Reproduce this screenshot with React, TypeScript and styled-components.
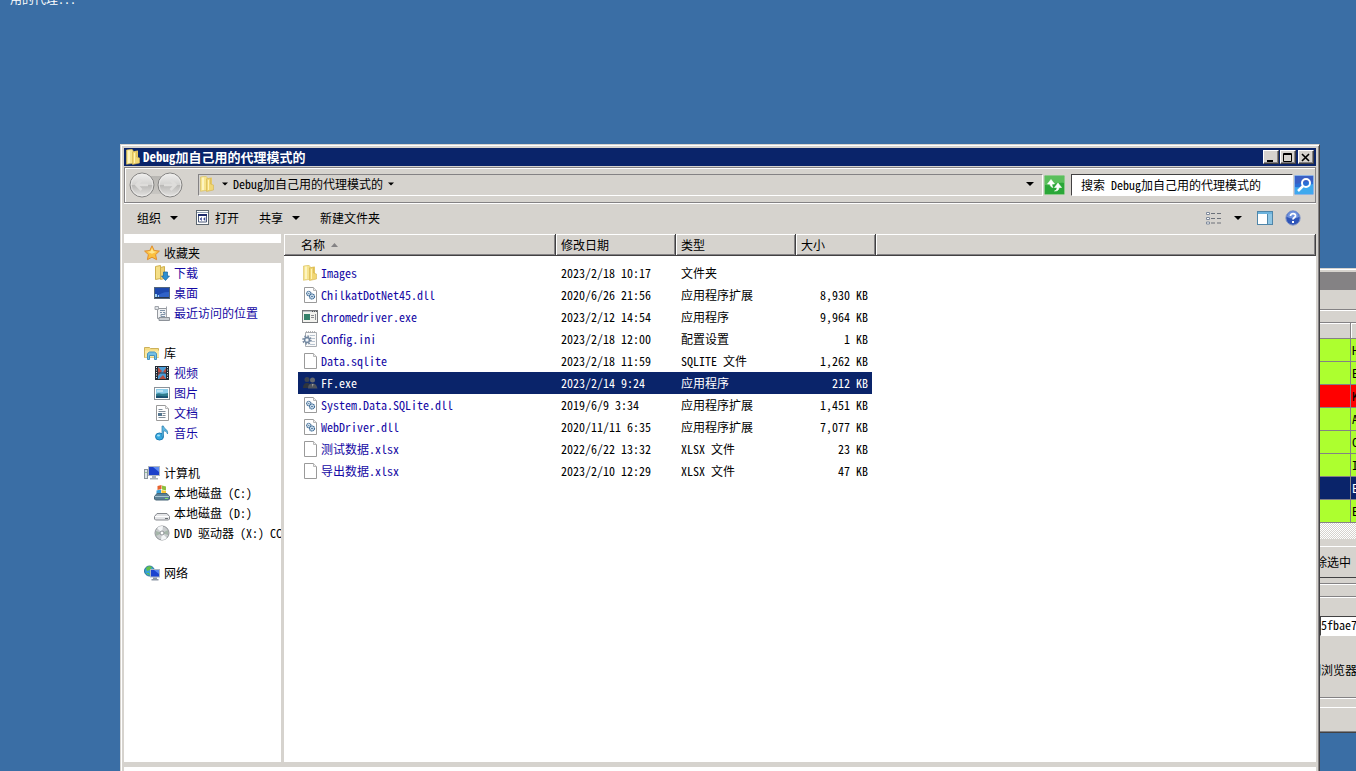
import React from "react";
import styled, { createGlobalStyle, css } from "styled-components";

const face = "#d6d3ce";
const shadow = "#848284";
const dark = "#424142";
const navy = "#0a246a";
const link = "#1408a4";

const Global = createGlobalStyle`
  *, *::before, *::after { box-sizing: border-box; }
  html, body, #root { height: 100%; margin: 0; }
  body {
    overflow: hidden;
    background: #3a6ea5;
    color: #000;
    font: 12px/20px "Noto Sans CJK SC", sans-serif;
    font-feature-settings: "hwid" 1;
  }
  button, input, table {
    font: inherit;
    font-feature-settings: inherit;
    color: inherit;
  }
  svg { display: block; flex: none; }
`;

const Desktop = styled.main`
  position: relative;
  height: 100%;
  overflow: hidden;
`;

const DesktopLabel = styled.span`
  position: absolute;
  top: -11px;
  left: 10px;
  color: #fff;
`;

const Frame = styled.section`
  position: absolute;
  display: flex;
  flex-direction: column;
  padding: 2px;
  background: ${face};
  border: 2px solid;
  border-color: ${face} ${dark} ${dark} ${face};
  box-shadow: inset 1px 1px #fff, inset -1px -1px ${shadow};
`;

const ExplorerFrame = styled(Frame)`
  top: 144px;
  left: 120px;
  right: 36px;
  bottom: 0;
  border-width: 1px 1px 0 1px;
  padding: 3px 3px 0 3px;
  box-shadow: inset 1px 1px #fff, inset -1px 0 ${shadow};
`;

const TitleBar = styled.header`
  display: flex;
  flex: none;
  align-items: center;
  gap: 2px;
  height: 18px;
  padding: 0 2px 0 1px;
  background: ${navy};
  color: #fff;
`;

const Title = styled.h1`
  flex: 1;
  margin: 0;
  font-size: 13px;
  font-weight: 700;
  line-height: 18px;
`;

const Captions = styled.div`
  display: flex;
  gap: 1px;
`;

const CaptionButton = styled.button`
  display: grid;
  place-items: center;
  width: 16px;
  height: 14px;
  padding: 0;
  background: ${face};
  border: 1px solid;
  border-color: #fff ${dark} ${dark} #fff;
  box-shadow: inset -1px -1px ${shadow};
`;

const NavBar = styled.nav`
  display: flex;
  flex: none;
  align-items: center;
  height: 36px;
  margin-top: 1px;
  padding: 0 1px 0 4px;
  border: 1px solid ${shadow};
  box-shadow: inset 1px 1px #fff, 0 1px #fff;
`;

const History = styled.div`
  display: flex;
  gap: 2px;
  margin-right: 15px;
  background: linear-gradient(#b8b6b2, #c8c6c2) center / 28px 18px no-repeat;
`;

const Plain = styled.button`
  display: flex;
  align-items: center;
  padding: 0;
  border: 0;
  background: none;
`;

const AddressBar = styled.div`
  display: flex;
  flex: 1;
  align-items: center;
  height: 22px;
  padding: 0 8px 2px 0;
  border: 1px solid;
  border-color: ${shadow} #fff #fff ${shadow};
`;

const Crumb = styled(Plain)`
  gap: 5px;
  margin-left: 7px;
`;

const Fill = styled.span`
  flex: 1;
`;

const RefreshButton = styled(Plain)`
  margin: 0 6px 0 1px;
`;

const SearchBox = styled.input`
  width: 222px;
  height: 22px;
  padding: 0 9px 2px;
  border: 1px solid;
  border-color: ${dark} #fff #fff ${dark};
  outline: 0;
  background: #fff;
`;

const SearchButton = styled(Plain)`
  margin-left: 1px;
`;

const ToolBar = styled.div`
  display: flex;
  flex: none;
  align-items: center;
  height: 31px;
  padding: 0 15px 2px 13px;
`;

const Tool = styled(Plain)<{ $gap?: number; $before?: number }>`
  gap: ${(p) => p.$gap ?? 9}px;
  margin-left: ${(p) => p.$before ?? 0}px;
`;

const Body = styled.div`
  display: flex;
  flex: 1;
  min-height: 0;
`;

const Sidebar = styled.aside`
  flex: none;
  width: 160px;
  padding-top: 9px;
  overflow: hidden;
  background: #fff;
  border-right: 3px solid ${face};
`;

const Group = styled.ul`
  margin: 0 0 20px;
  padding: 0;
  list-style: none;
`;

const Place = styled.a<{ $head?: boolean; $active?: boolean; $plain?: boolean }>`
  display: flex;
  align-items: center;
  gap: 4px;
  height: 20px;
  padding-left: ${(p) => (p.$head ? 20 : 30)}px;
  white-space: nowrap;
  text-decoration: none;
  color: ${(p) => (p.$head || p.$plain ? "#000" : link)};
  background: ${(p) => (p.$active ? face : "transparent")};
`;

const FilePane = styled.div`
  flex: 1;
  min-width: 0;
  overflow: hidden;
  background: #fff;
`;

const Files = styled.table`
  width: 100%;
  table-layout: fixed;
  border-collapse: separate;
  border-spacing: 0;
  tbody::before {
    content: "";
    display: block;
    height: 6px;
  }
`;

const Col = styled.col<{ $w?: number }>`
  ${(p) => p.$w && css`width: ${p.$w}px;`}
`;

const Head = styled.th<{ $name?: boolean }>`
  height: 22px;
  padding: 0 0 0 ${(p) => (p.$name ? 17 : 5)}px;
  text-align: left;
  font-weight: 400;
  background: ${face};
  box-shadow: inset -1px -1px ${dark}, inset 1px 1px #fff, inset -2px -2px ${shadow};
`;

const HeadLabel = styled.span`
  display: flex;
  align-items: center;
  gap: 6px;
`;

const FileRow = styled.tr<{ $selected?: boolean }>`
  --name: ${(p) => (p.$selected ? "#fff" : link)};
  color: ${(p) => (p.$selected ? "#fff" : "#000")};
  --fill: ${(p) => (p.$selected ? navy : "transparent")};
`;

const Data = styled.td`
  padding: 0;
  &:first-child { padding-left: 14px; }
  &:last-child { padding-right: 4px; }
`;

const Cell = styled.div<{ $right?: boolean }>`
  height: 22px;
  padding: 0 4px 0 5px;
  line-height: 22px;
  white-space: nowrap;
  text-align: ${(p) => (p.$right ? "right" : "left")};
  background: var(--fill);
`;

const NameCell = styled(Cell)`
  display: flex;
  align-items: center;
  gap: 3px;
  padding-left: 4px;
  color: var(--name);
`;

const Details = styled.footer`
  flex: none;
  height: 9px;
  background: #fff;
  border-top: 5px solid ${face};
`;

/* The application window behind the explorer, running off the right side */
const BackFrame = styled(Frame)`
  top: 268px;
  left: calc(100% - 68px);
  width: 240px;
  border-width: 1px;
  padding: 3px;
`;

const BackTitle = styled.div`
  height: 18px;
  background: #848284;
`;

const Strip = styled.div<{ $h: number }>`
  display: flex;
  align-items: center;
  height: ${(p) => p.$h}px;
  border-bottom: 1px solid ${shadow};
  box-shadow: 0 1px #fff;
`;

const Grid = styled.table`
  width: 100%;
  table-layout: fixed;
  border-collapse: separate;
  border-spacing: 0;
  th {
    height: 16px;
    padding: 0;
    border-right: 1px solid ${shadow};
    border-bottom: 1px solid ${shadow};
    box-shadow: inset 1px 1px #fff;
  }
`;

const GridCell = styled.td<{ $bg: string }>`
  height: 23px;
  padding: 0 1px;
  line-height: 22px;
  white-space: nowrap;
  border-right: 1px solid ${shadow};
  border-bottom: 1px solid ${shadow};
  background: ${(p) => p.$bg};
  color: ${(p) => (p.$bg === navy ? "#fff" : "#000")};
`;

const Track = styled.div`
  height: 16px;
  background: repeating-conic-gradient(#fff 0 25%, ${face} 0 50%) 0 0 / 2px 2px;
`;

const BackButton = styled.button`
  height: 32px;
  margin-top: 7px;
  padding: 0 0 0 22px;
  text-align: left;
  background: ${face};
  border: 1px solid;
  border-color: #fff ${dark} ${dark} #fff;
`;

const KeyField = styled.input`
  width: 170px;
  height: 20px;
  margin: 19px 0 0 28px;
  padding: 0 0 2px;
  border: 1px solid;
  border-color: ${dark} #fff #fff ${dark};
  background: #fff;
`;

const BackLabel = styled.div`
  height: 61px;
  padding: 24px 0 0 17px;
`;

const BackFooter = styled.div`
  height: 32px;
  padding-top: 9px;
  border-top: 1px solid ${shadow};
  box-shadow: inset 0 1px #fff;
  &::before {
    content: "";
    display: block;
    height: 1px;
    background: #fff;
  }
`;

const Svg = ({ w = 16, h = 16, children }: { w?: number; h?: number; children: React.ReactNode }) => (
  <svg width={w} height={h} viewBox={`0 0 ${w} ${h}`} fill="none" aria-hidden="true">
    {children}
  </svg>
);

const Down = ({ w = 8 }: { w?: number }) => (
  <svg width={w} height="4" viewBox="0 0 8 4" aria-hidden="true">
    <path d="M0 0h8L4 4z" fill="#000" />
  </svg>
);

const Folder = () => (
  <Svg>
    <path d="M1.500 1l5.500-.7 1 1v13l-6.500 1z" fill="#f6e48e" stroke="#d9bd57" strokeWidth=".6" />
    <path d="M8 2.500l5-1v12l-5 1z" fill="#e6c863" />
    <path d="M7.500 3l4-1v6l3 1v5l-7 1.500z" fill="#f1d774" stroke="#d3b450" strokeWidth=".6" />
    <path d="M4 1.500v12.500" stroke="#fffad2" strokeWidth="1.500" />
    <path d="M9.500 4v10" stroke="#fff3b5" />
  </Svg>
);

const Page = () => (
  <>
    <path d="M2.500.5h9l3 3v12h-12z" fill="#fff" stroke="#9a9a9a" />
    <path d="M11.500.5v3h3" stroke="#b8b8b8" fill="#eee" />
  </>
);

const Blank = () => (
  <Svg>
    <Page />
  </Svg>
);

const Dll = () => (
  <Svg>
    <Page />
    <circle cx="6.800" cy="6.500" r="2.200" stroke="#4c7399" strokeWidth="1.100" fill="#d7e6f2" strokeDasharray="1.500 .3" />
    <circle cx="10" cy="9.500" r="2.500" stroke="#3f6d98" strokeWidth="1.200" fill="#d7e6f2" strokeDasharray="1.500 .3" />
    <circle cx="10" cy="9.500" r=".8" fill="#315f8d" />
    <circle cx="6.800" cy="6.500" r=".6" fill="#315f8d" />
  </Svg>
);

const Exe = () => (
  <Svg>
    <rect x=".5" y="1.500" width="15" height="12" fill="#f2f2ee" stroke="#77797b" />
    <path d="M1 2.500h14" stroke="#b9bec2" />
    <path d="M10 2.500h1M12 2.500h1M14 2.500h1" stroke="#555" />
    <rect x="2" y="5" width="6" height="6" fill="#35816a" />
    <path d="M9 6.500h3M9 8.500h3M13.500 5v6" stroke="#8b8d91" />
  </Svg>
);

const Ini = () => (
  <Svg>
    <path d="M3.500 1.500h11v14h-11z" fill="#fafafa" stroke="#a9adb2" />
    <path d="M4 .8h10" stroke="#999" strokeDasharray="1 1" />
    <path d="M8 4.500h5M10 7.500h3M10 10.500h3M8 13.500h5" stroke="#b8c4d0" />
    <circle cx="5" cy="9" r="3.800" stroke="#7d8fa4" strokeWidth="2" strokeDasharray="1.600 1.380" />
    <circle cx="5" cy="9" r="2.500" fill="#cfdae6" stroke="#71869f" strokeWidth="1.300" />
    <circle cx="5" cy="9" r="1" fill="#fff" />
  </Svg>
);

const People = () => (
  <Svg>
    <circle cx="5" cy="4.500" r="2.500" fill="#3c444f" />
    <path d="M1 13c0-4 2-5 4-5s4 1 4 5z" fill="#2e343d" />
    <circle cx="10.500" cy="5" r="2.500" fill="#666a70" />
    <path d="M6 13.500c0-4 2-5 4.500-5s4 1 5 5z" fill="#4f545c" />
    <path d="M10 9l.7 3 .8-3" fill="#aaa" />
  </Svg>
);

const Star = () => (
  <Svg>
    <path d="M8 .8l2.200 4.700 5.200.6-3.800 3.500 1 5.100L8 12.200l-4.600 2.500 1-5.100L.6 6.100l5.200-.6z" fill="#fcc03f" stroke="#e08e2d" />
    <path d="M8 3l1.400 3.300 3.300.5-4.700 2-4.700-2 3.300-.5z" fill="#ffe690" />
  </Svg>
);

const Download = () => (
  <Svg>
    <path d="M1.500 1.500l5-1v13l-5 1z" fill="#f5df87" stroke="#cfb04e" />
    <path d="M6.500 2.500l4-1v12l-4 1z" fill="#edd274" stroke="#cfb04e" />
    <path d="M9.500 7h4v4h2l-4 4.500-4-4.500h2z" fill="#2d8fd0" stroke="#17659c" strokeWidth=".7" />
  </Svg>
);

const DesktopIcon = () => (
  <Svg>
    <rect x=".5" y="2.500" width="15" height="11" fill="#2f62c8" stroke="#52657c" />
    <path d="M1 3h14v4C9 7 5 9 1 12z" fill="#1c48ae" />
    <path d="M1 12.500h14" stroke="#27374b" />
    <path d="M1 9h2v3H1zM4 10h1v2H4z" fill="#9fd3f3" />
  </Svg>
);

const Recent = () => (
  <Svg>
    <path d="M3.500 3.500h9v10h-9z" fill="#f0f2f4" stroke="#95999f" />
    <path d="M1 1.500h3.500v3H1zM12.500 1.500v12" fill="#e1e4e8" stroke="#a0a4aa" />
    <path d="M5 12.500h10.500v3H5z" fill="#c9ced3" stroke="#8d9299" />
    <path d="M6 5.500h5M6 7.500h2M9 7.500h2v2H7v2h4" stroke="#7f93a8" />
  </Svg>
);

const Library = () => (
  <Svg>
    <path d="M.5 2.500h5l1 1h8v9H.5z" fill="#f4dc83" stroke="#cdb15a" />
    <path d="M1 5.500h14v7H1z" fill="#fae9a5" />
    <path d="M3.500 14.500v-6l2-1.500h5l2 1.500v6h-2v-4h-5v4z" fill="#74bfe4" stroke="#4693bd" />
  </Svg>
);

const Video = () => (
  <Svg>
    <rect x="1" y="1" width="14" height="14" fill="#222b34" />
    <rect x="4" y="2" width="8" height="12" fill="#4a9dd8" />
    <path d="M4 2l4 4-4 5zM12 3l-3 4 3 2zM5 14l4-4 3 4z" fill="#b74e40" />
    <path d="M2.500 2v12M13.500 2v12" stroke="#e8eef2" strokeDasharray="1 1.500" />
    <path d="M4 8h8" stroke="#203a52" />
  </Svg>
);

const Picture = () => (
  <Svg>
    <rect x=".5" y="2.500" width="15" height="12" fill="#fff" stroke="#8b9299" />
    <rect x="2" y="4" width="12" height="9" fill="#8bcdea" />
    <path d="M2 9c3-2 5 1 12-1v5H2z" fill="#2f7c8e" />
    <path d="M2 11c4-1 7 1 12 0v2H2z" fill="#194f70" />
    <path d="M3 6h6" stroke="#eefaff" />
  </Svg>
);

const Doc = () => (
  <Svg>
    <Page />
    <path d="M4.500 4.500h4M4.500 6.500h7M8.500 8.500h3M8.500 10.500h3M4.500 12.500h7" stroke="#7f8c98" />
    <path d="M4 8h4v3H4z" fill="#53758f" />
  </Svg>
);

const Music = () => (
  <Svg>
    <ellipse cx="5.500" cy="11.500" rx="4" ry="3.500" fill="#35a8df" stroke="#1c7ab2" />
    <path d="M8 12V1h1.500c0 3 5 3 4 8-1-3-2.500-3-4-3v6z" fill="#62b9e3" stroke="#2a7fae" strokeWidth=".7" />
    <ellipse cx="4.500" cy="10.500" rx="1.500" ry="1" fill="#a4e2fa" />
  </Svg>
);

const Computer = () => (
  <Svg>
    <rect x=".5" y="4.500" width="3" height="9" fill="#dce2e6" stroke="#8a949d" />
    <path d="M1.500 7.500h1" stroke="#4ba54d" />
    <rect x="4.500" y="1.500" width="11" height="9" fill="#1a3fca" stroke="#aeb7c4" />
    <path d="M9 2h6v5z" fill="#5c8af2" />
    <path d="M8 11h4v2h2v1.500H6V13h2z" fill="#a6afb8" />
  </Svg>
);

const Drive = ({ system }: { system?: boolean }) => (
  <Svg>
    {system && (
      <>
        <path d="M3.500 1l4-1v4l-4 1z" fill="#e8632e" />
        <path d="M8 .5l4 1v4L8 4.500z" fill="#8cc03f" />
        <path d="M2.500 5.500l4.500-1v5H2.500z" fill="#3aa0d8" />
        <path d="M7.500 5l4.500 1v4H7.500z" fill="#fbc52f" />
      </>
    )}
    <path d="M.5 11.500L3 8.500h10l2.500 3v2.500l-1 1h-13l-1-1z" fill={system ? "#5d8196" : "#e5e6e8"} stroke={system ? "#476577" : "#888b90"} />
    <path d="M1 11.500h14" stroke={system ? "#a9c5d3" : "#fff"} />
    <path d="M11 13.500h3" stroke={system ? "#7fe06a" : "#6d7277"} />
  </Svg>
);

const Disc = () => (
  <Svg>
    <circle cx="8" cy="8" r="7" fill="#c9ccce" stroke="#8e9296" />
    <path d="M8 8L3 3a7 7 0 0 1 6-2zM8 8l5 5a7 7 0 0 1-6 2z" fill="#f4f6f7" />
    <path d="M8 8l6-3v5zM8 8l-6 3V6z" fill="#a5b5a9" />
    <circle cx="8" cy="8" r="2" fill="#fff" stroke="#8e9296" />
  </Svg>
);

const Network = () => (
  <Svg>
    <circle cx="5.500" cy="6" r="5" fill="#35a2d8" stroke="#2b7597" />
    <path d="M2 3c2-2 4-2 6-1L6 5 3 6zM2 8l3 0 1 2.500z" fill="#64c048" />
    <rect x="6.500" y="4.500" width="9" height="7.500" fill="#1b43cf" stroke="#aab6c6" />
    <path d="M10 5h5v4z" fill="#5684ef" />
    <path d="M9 12.500h4v1.500h1.500v1.500h-7V14H9z" fill="#8d98a5" />
  </Svg>
);

const Round = ({ flip }: { flip?: boolean }) => (
  <svg width="26" height="26" viewBox="0 0 26 26" fill="none" aria-hidden="true">
    <defs>
      <linearGradient id="orb" x1="0" y1="0" x2="0" y2="1">
        <stop offset="0" stopColor="#f0f0ef" />
        <stop offset=".48" stopColor="#d3d2d0" />
        <stop offset=".5" stopColor="#b9b8b6" />
        <stop offset="1" stopColor="#e6e5e3" />
      </linearGradient>
    </defs>
    <circle cx="13" cy="13" r="12" fill="url(#orb)" stroke="#858483" />
    <circle cx="13" cy="13" r="10.800" stroke="#efeeec" strokeOpacity=".7" />
    <path
      d={flip ? "M7 13h11M13.500 8l5 5-5 5" : "M19 13H8M12.500 8l-5 5 5 5"}
      stroke="#dedddb"
      strokeWidth="2.500"
    />
  </svg>
);

const places = [
  {
    head: "收藏夹",
    icon: <Star />,
    active: true,
    items: [
      ["下载", <Download />],
      ["桌面", <DesktopIcon />],
      ["最近访问的位置", <Recent />],
    ],
  },
  {
    head: "库",
    icon: <Library />,
    items: [
      ["视频", <Video />],
      ["图片", <Picture />],
      ["文档", <Doc />],
      ["音乐", <Music />],
    ],
  },
  {
    head: "计算机",
    icon: <Computer />,
    plain: true,
    items: [
      ["本地磁盘 (C:)", <Drive system />],
      ["本地磁盘 (D:)", <Drive />],
      ["DVD 驱动器 (X:) CC", <Disc />],
    ],
  },
  { head: "网络", icon: <Network />, items: [] },
] as {
  head: string;
  icon: React.ReactNode;
  active?: boolean;
  plain?: boolean;
  items: [string, React.ReactNode][];
}[];

const files: [React.ReactNode, string, string, string, string][] = [
  [<Folder />, "Images", "2023/2/18 10:17", "文件夹", ""],
  [<Dll />, "ChilkatDotNet45.dll", "2020/6/26 21:56", "应用程序扩展", "8,930 KB"],
  [<Exe />, "chromedriver.exe", "2023/2/12 14:54", "应用程序", "9,964 KB"],
  [<Ini />, "Config.ini", "2023/2/18 12:00", "配置设置", "1 KB"],
  [<Blank />, "Data.sqlite", "2023/2/18 11:59", "SQLITE 文件", "1,262 KB"],
  [<People />, "FF.exe", "2023/2/14 9:24", "应用程序", "212 KB"],
  [<Dll />, "System.Data.SQLite.dll", "2019/6/9 3:34", "应用程序扩展", "1,451 KB"],
  [<Dll />, "WebDriver.dll", "2020/11/11 6:35", "应用程序扩展", "7,077 KB"],
  [<Blank />, "测试数据.xlsx", "2022/6/22 13:32", "XLSX 文件", "23 KB"],
  [<Blank />, "导出数据.xlsx", "2023/2/10 12:29", "XLSX 文件", "47 KB"],
];

const lime = "#adff2f";
const gridRows: [string, string][] = [
  ["H", lime],
  ["E", lime],
  ["K", "#ff0000"],
  ["A", lime],
  ["C", lime],
  ["I", lime],
  ["E", navy],
  ["E", lime],
];

function BackWindow() {
  return (
    <BackFrame>
      <BackTitle />
      <Strip $h={20} />
      <Strip $h={13} />
      <Grid>
        <colgroup>
          <Col $w={59} />
          <col />
        </colgroup>
        <thead>
          <tr>
            <th />
            <th />
          </tr>
        </thead>
        <tbody>
          {gridRows.map(([text, bg], i) => (
            <tr key={i}>
              <GridCell $bg={bg} />
              <GridCell $bg={bg}>{text}</GridCell>
            </tr>
          ))}
        </tbody>
      </Grid>
      <Track />
      <BackButton>除选中</BackButton>
      <Strip $h={6} />
      <Strip $h={13} />
      <KeyField defaultValue="5fbae7" aria-label="Key" />
      <BackLabel>测浏览器</BackLabel>
      <BackFooter />
    </BackFrame>
  );
}

export default function App() {
  return (
    <>
      <Global />
      <Desktop>
        <DesktopLabel>用的代理...</DesktopLabel>
        <BackWindow />
        <ExplorerFrame>
          <TitleBar>
            <Folder />
            <Title>Debug加自己用的代理模式的</Title>
            <Captions>
              <CaptionButton aria-label="最小化">
                <Svg w={10} h={9}>
                  <path d="M1 7h6v2H1z" fill="#000" />
                </Svg>
              </CaptionButton>
              <CaptionButton aria-label="最大化">
                <Svg w={10} h={9}>
                  <path d="M.5 .5h8v8h-8zM0 1.500h9" stroke="#000" />
                </Svg>
              </CaptionButton>
              <Fill />
              <CaptionButton aria-label="关闭">
                <Svg w={10} h={9}>
                  <path d="M1 1l7 7M8 1L1 8" stroke="#000" strokeWidth="1.600" />
                </Svg>
              </CaptionButton>
            </Captions>
          </TitleBar>

          <NavBar>
            <History>
              <Plain aria-label="后退">
                <Round />
              </Plain>
              <Plain aria-label="前进">
                <Round flip />
              </Plain>
            </History>
            <AddressBar>
              <Folder />
              <Crumb>
                <Down w={6} />
                <span>Debug加自己用的代理模式的</span>
                <Down w={6} />
              </Crumb>
              <Fill />
              <Plain aria-label="历史记录">
                <Down />
              </Plain>
            </AddressBar>
            <RefreshButton aria-label="刷新">
              <Svg w={21} h={20}>
                <rect x=".5" y=".5" width="20" height="19" rx="1" fill="#2aa738" stroke="#8fca8c" />
                <path d="M1 1h19v7C13 7 8 11 1 10z" fill="#5abf5c" />
                <path d="M7 4.500L3.500 9H6c0 2 1 3 3 3.500C8 11 8 10 8 9h2.500z" fill="#fff" stroke="#fff" strokeWidth=".6" />
                <path d="M14 8l-3.500 4.500H13c0 2-1 3-2.500 3.500 3 0 4.500-1 4.500-3.500h2.500z" fill="#fff" stroke="#fff" strokeWidth=".6" />
              </Svg>
            </RefreshButton>
            <SearchBox aria-label="搜索" defaultValue="搜索 Debug加自己用的代理模式的" />
            <SearchButton aria-label="搜索">
              <Svg w={20} h={20}>
                <rect x=".5" y=".5" width="19" height="19" rx="1" fill="#2a6fd6" stroke="#8db4e6" />
                <path d="M1 12c8 1 12-2 18-3v10H1z" fill="#3fa9ee" />
                <path d="M1 1h18v6C12 6 6 9 1 9z" fill="#3a5fc4" />
                <circle cx="12" cy="8" r="4" stroke="#fff" strokeWidth="2" />
                <path d="M9 11l-5 5" stroke="#fff" strokeWidth="2.500" />
              </Svg>
            </SearchButton>
          </NavBar>

          <ToolBar>
            <Tool>
              组织
              <Down />
            </Tool>
            <Tool $before={17} $gap={4}>
              <Svg>
                <rect x="1.500" y=".5" width="12" height="14" fill="#fff" stroke="#5c6670" />
                <path d="M2 2.500h11" stroke="#8fa0b4" />
                <rect x="3" y="4" width="9" height="2" fill="#1d2a6c" />
                <path d="M3.500 6v6h8V6" stroke="#4b5978" />
                <path d="M5 9l1.500-1.500v3zM10 7.500v3L8.500 9z" fill="#2b3a8c" stroke="#2b3a8c" strokeWidth=".5" />
              </Svg>
              打开
            </Tool>
            <Tool $before={20}>
              共享
              <Down />
            </Tool>
            <Tool $before={20}>新建文件夹</Tool>
            <Fill />
            <Tool aria-label="更改视图" $gap={12}>
              <Svg>
                <path d="M.5 2.500h3v2h-3zM.5 7.500h3v2h-3zM.5 12h3v2h-3z" stroke="#7f8a9c" fill="#fff" />
                <path d="M5 3.500h4M11 3.500h4M5 8.500h4M11 8.500h4M5 13h4M11 13h4" stroke="#6c7179" />
              </Svg>
              <Down />
            </Tool>
            <Tool aria-label="预览窗格" $before={15}>
              <Svg>
                <rect x=".5" y="1.500" width="15" height="13" fill="#fff" stroke="#4f86a9" />
                <path d="M1 3h14" stroke="#6cb3dd" strokeWidth="2" />
                <path d="M11 4h4v10h-4z" fill="#8fc6e4" />
                <path d="M10.500 4v10" stroke="#4f86a9" />
              </Svg>
            </Tool>
            <Tool aria-label="帮助" $before={12}>
              <Svg>
                <circle cx="8" cy="8" r="7.200" fill="#2f55b8" stroke="#8a9cc8" />
                <path d="M2 7a6 6 0 0 1 12 0c-4 2-8 2-12 0z" fill="#6f92dd" />
                <path d="M5.500 6c0-3.500 5.500-3 5 0-.3 1.500-2.500 1.500-2.500 3.500" stroke="#fff" strokeWidth="1.800" />
                <path d="M7 11h2v2H7z" fill="#fff" />
              </Svg>
            </Tool>
          </ToolBar>

          <Body>
            <Sidebar>
              {places.map((g) => (
                <Group key={g.head}>
                  <li>
                    <Place href="#" $head $active={g.active}>
                      {g.icon}
                      {g.head}
                    </Place>
                  </li>
                  {g.items.map(([name, icon]) => (
                    <li key={name}>
                      <Place href="#" $plain={g.plain}>
                        {icon}
                        {name}
                      </Place>
                    </li>
                  ))}
                </Group>
              ))}
            </Sidebar>
            <FilePane>
              <Files>
                <colgroup>
                  <Col $w={272} />
                  <Col $w={120} />
                  <Col $w={120} />
                  <Col $w={80} />
                  <col />
                </colgroup>
                <thead>
                  <tr>
                    <Head $name>
                      <HeadLabel>
                        名称
                        <Svg w={7} h={4}>
                          <path d="M0 4h7L3.500 0z" fill="#848284" />
                        </Svg>
                      </HeadLabel>
                    </Head>
                    <Head>修改日期</Head>
                    <Head>类型</Head>
                    <Head>大小</Head>
                    <Head />
                  </tr>
                </thead>
                <tbody>
                  {files.map(([icon, name, date, type, size]) => (
                    <FileRow key={name} $selected={name === "FF.exe"}>
                      <Data>
                        <NameCell>
                          {icon}
                          {name}
                        </NameCell>
                      </Data>
                      <Data>
                        <Cell>{date}</Cell>
                      </Data>
                      <Data>
                        <Cell>{type}</Cell>
                      </Data>
                      <Data>
                        <Cell $right>{size}</Cell>
                      </Data>
                    </FileRow>
                  ))}
                </tbody>
              </Files>
            </FilePane>
          </Body>
          <Details />
        </ExplorerFrame>
      </Desktop>
    </>
  );
}
